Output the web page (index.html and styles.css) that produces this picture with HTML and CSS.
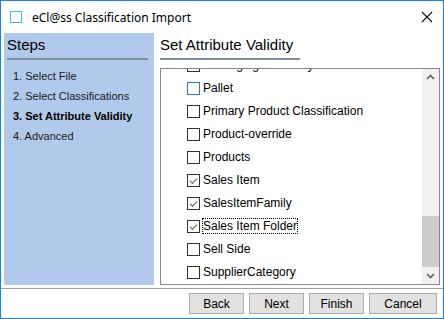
FILE: index.html
```html
<!DOCTYPE html>
<html lang="en">

<head>
    <meta charset="UTF-8">
    <title>eCl@ss Classification Import</title>
    <link rel="stylesheet" href="styles.css">
</head>

<body>
    <div class="window">
        <!-- Title bar -->
        <div class="titlebar">
            <span class="app-icon"></span>
            <span class="title">eCl@ss Classification Import</span>
            <svg class="close" width="12" height="12" viewBox="0 0 12 12">
                <path d="M1 1 L11 11 M11 1 L1 11" stroke="#111" stroke-width="1.1" fill="none" />
            </svg>
        </div>

        <div class="main">
            <div class="steps">
                <h2 class="heading">Steps</h2>
                <ol class="step-list">
                    <li>1. Select File</li>
                    <li>2. Select Classifications</li>
                    <li class="current">3. Set Attribute Validity</li>
                    <li>4. Advanced</li>
                </ol>
            </div>

            <div class="content">
                <h2 class="heading content-heading">Set Attribute Validity</h2>
                <div class="listbox">
                    <div class="items">
                        <div class="item"><span class="box"></span>Packaging Hierarchy</div>
                        <div class="item"><span class="box hover"></span>Pallet</div>
                        <div class="item"><span class="box"></span>Primary Product Classification</div>
                        <div class="item"><span class="box"></span>Product-override</div>
                        <div class="item"><span class="box"></span>Products</div>
                        <div class="item"><span class="box checked"></span>Sales Item</div>
                        <div class="item"><span class="box checked"></span>SalesItemFamily</div>
                        <div class="item"><span class="box checked"></span><span class="focus">Sales Item Folder</span></div>
                        <div class="item"><span class="box"></span>Sell Side</div>
                        <div class="item"><span class="box"></span>SupplierCategory</div>
                    </div>
                    <div class="scrollbar">
                        <svg class="arrow" width="17" height="17" viewBox="0 0 17 17">
                            <path d="M5 10 L8.5 6.5 L12 10" stroke="#606060" stroke-width="1.6" fill="none" />
                        </svg>
                        <div class="track">
                            <div class="thumb"></div>
                        </div>
                        <svg class="arrow" width="17" height="17" viewBox="0 0 17 17">
                            <path d="M5 7 L8.5 10.5 L12 7" stroke="#606060" stroke-width="1.6" fill="none" />
                        </svg>
                    </div>
                </div>
            </div>
        </div>

        <div class="buttons">
            <button>Back</button>
            <button>Next</button>
            <button>Finish</button>
            <button class="wide">Cancel</button>
        </div>
    </div>
</body>

</html>
```

FILE: styles.css
```css
body {
    margin: 0;
    padding: 0;
    font-family: "Liberation Sans", Arial, sans-serif;
    background-color: white;
}

.window {
    width: 444px;
    height: 319px;
    box-sizing: border-box;
    border: 1px solid #1883d7;
    background-color: white;
    display: flex;
    flex-direction: column;
}

/* Title bar */
.titlebar {
    height: 32px;
    display: flex;
    align-items: center;
    padding: 0 8px 0 9px;
}

.app-icon {
    width: 10px;
    height: 10px;
    border: 1.5px solid #3cc4d6;
    margin-right: 10px;
}

.title {
    flex: 1;
    font-family: "Noto Sans", sans-serif;
    font-size: 12px;
    color: #000;
}

.close {
    margin-right: 2px;
}

/* Main area */
.main {
    display: flex;
    height: 252px;
    padding-left: 3px;
}

.steps {
    width: 150px;
    background-color: #b1c9ea;
    padding: 0 6px 0 3px;
    box-sizing: border-box;
}

.heading {
    margin: 0;
    font-size: 15px;
    font-weight: normal;
    color: #000;
    height: 22px;
    padding-top: 3px;
    border-bottom: 2px solid #7d8da2;
}

.step-list {
    list-style: none;
    margin: 0;
    padding: 6px 0 0 6px;
}

.step-list li {
    font-size: 11px;
    height: 20px;
    line-height: 20px;
    color: #1a1a1a;
}

.step-list .current {
    font-weight: bold;
    color: #000;
}

.content {
    margin-left: 6px;
    display: flex;
    flex-direction: column;
}

.content-heading {
    width: 140px;
}

.listbox {
    margin-top: 8px;
    width: 280px;
    height: 218px;
    box-sizing: border-box;
    border: 1px solid #828790;
    display: flex;
    overflow: hidden;
}

.items {
    flex: 1;
    margin-top: -15px;
}

.item {
    height: 23px;
    display: flex;
    align-items: center;
    padding-left: 26px;
    font-size: 12px;
    color: #000;
    white-space: nowrap;
}

.box {
    width: 11px;
    height: 11px;
    border: 1px solid #333;
    background-color: white;
    margin-right: 3px;
    position: relative;
}

.box.hover {
    border-color: #2a78c0;
}

.box.checked::after {
    content: "";
    position: absolute;
    left: 2px;
    top: 0;
    width: 6px;
    height: 3px;
    border-left: 1.5px solid #606060;
    border-bottom: 1.5px solid #606060;
    transform: translate(0, 3px) rotate(-45deg);
}

.focus {
    outline: 1px dotted #000;
    outline-offset: 0;
}

.scrollbar {
    width: 17px;
    background-color: #f0f0f0;
    display: flex;
    flex-direction: column;
}

.track {
    flex: 1;
    display: flex;
    flex-direction: column;
    justify-content: flex-end;
}

.thumb {
    height: 51px;
    background-color: #cdcdcd;
}

/* Bottom buttons */
.buttons {
    margin-top: 3px;
    border-top: 1px solid #a0a0a0;
    display: flex;
    justify-content: flex-end;
    gap: 5px;
    padding: 4px 6px 0 0;
}

button {
    width: 55px;
    height: 21px;
    font-family: "Liberation Sans", Arial, sans-serif;
    font-size: 12px;
    color: #000;
    background-color: #e1e1e1;
    border: 1px solid #adadad;
    padding: 0;
}

button.wide {
    width: 68px;
}
```
